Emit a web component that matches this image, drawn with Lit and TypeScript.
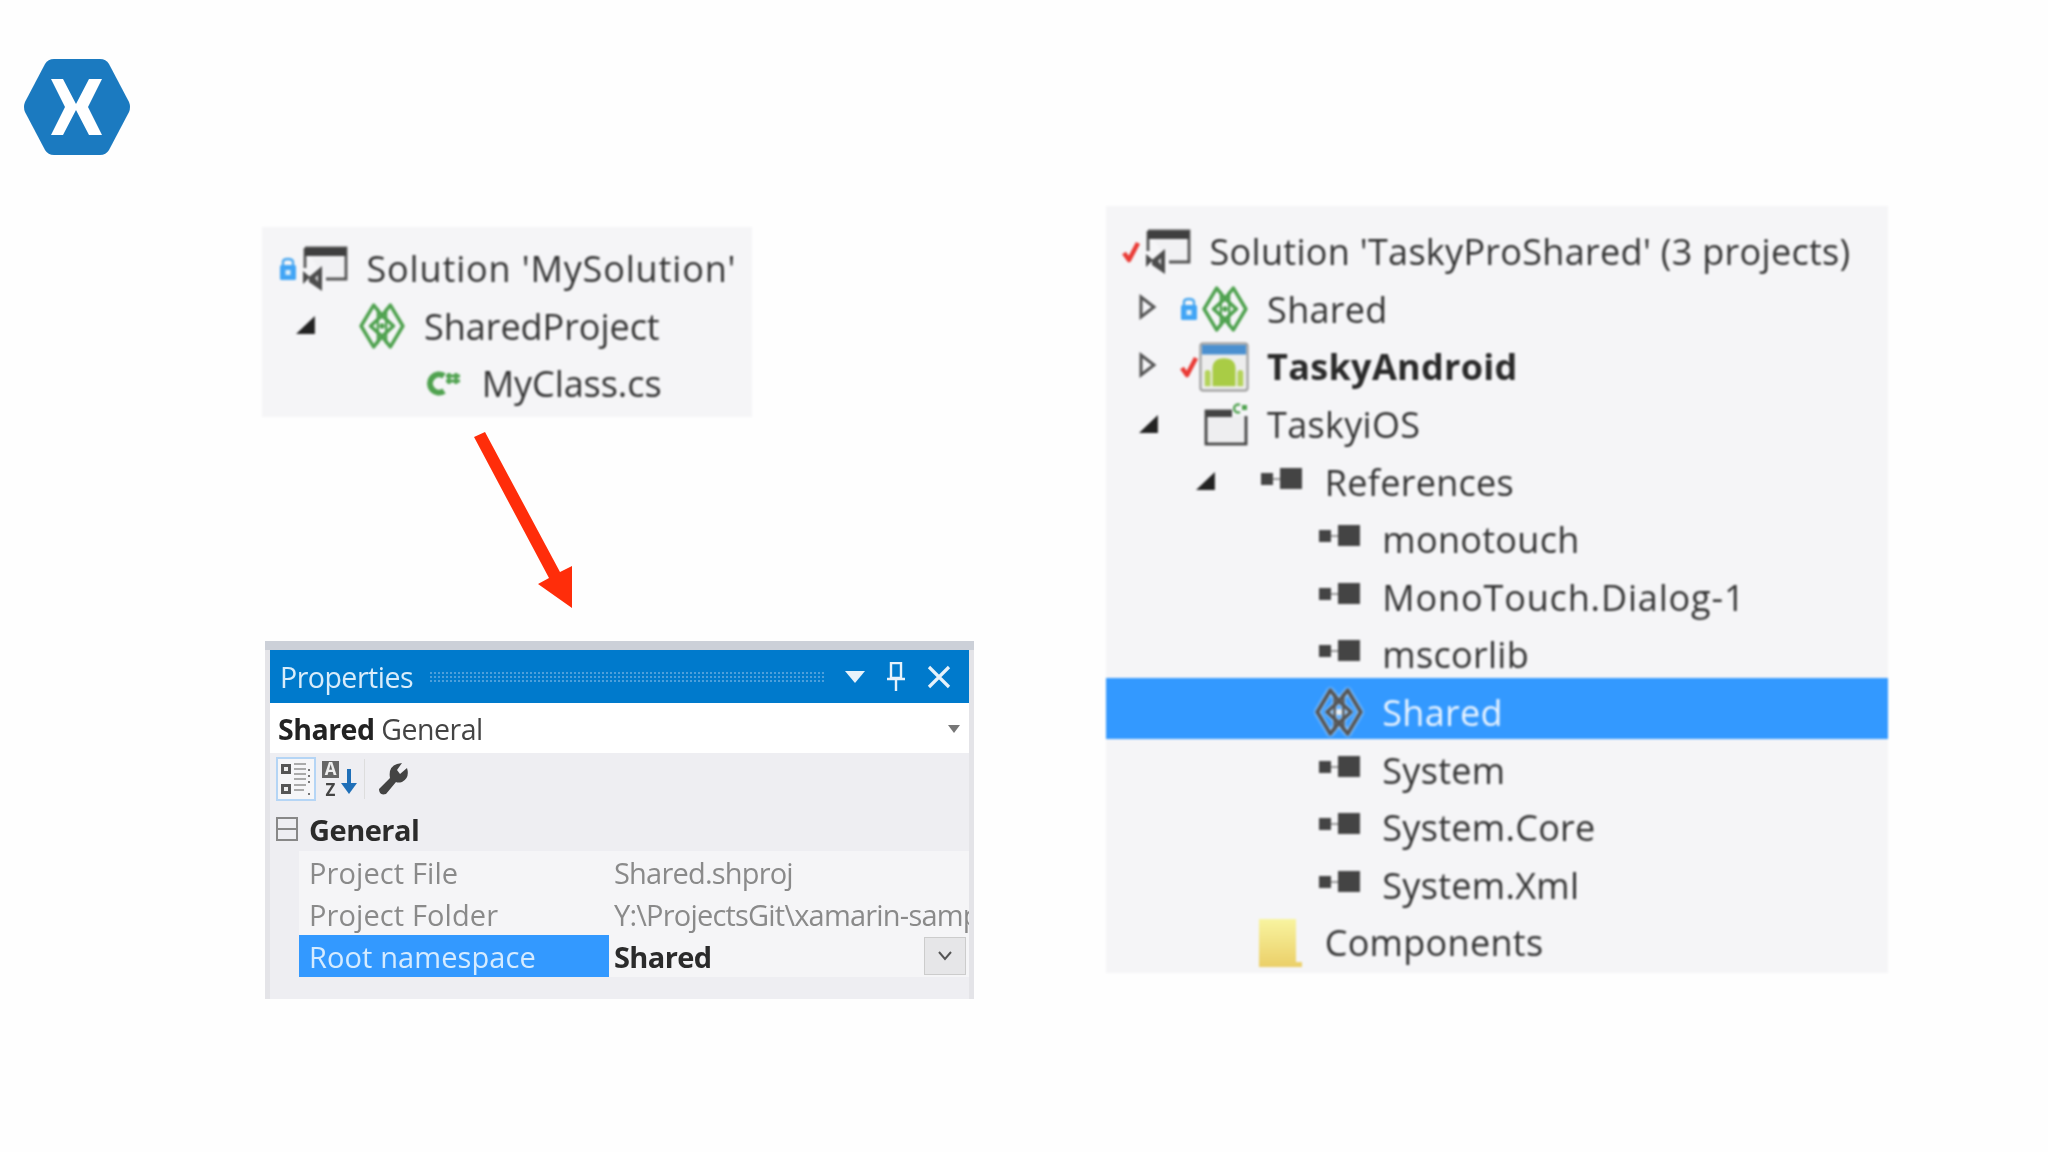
import { LitElement, html, css } from "lit";
import { customElement } from "lit/decorators.js";

const diamond = (c: string, dot: string) => html`<svg width="48" height="48" viewBox="0 0 46 46" fill="none" stroke=${c} stroke-width="3.4" stroke-linejoin="round">
  <path d="M15 3 L3 23 L15 43 L23 33 L31 43 L43 23 L31 3 L23 13 Z"/>
  <path d="M23 13 L12 23 L23 33 L34 23 Z"/>
  <path d="M19 6 V40 M27 6 V40" stroke-width="2.2"/>
  <circle cx="23" cy="23" r="2.6" fill=${dot} stroke="none"/>
</svg>`;

const solution = html`<svg width="46" height="46" viewBox="0 0 46 46">
  <path d="M3 2 H44 V33 H24 M3 2 V22" fill="#f1f1f3" stroke="#555" stroke-width="2.8"/>
  <rect x="3" y="2" width="41" height="8" fill="#3f3f3f"/>
  <path d="M1 25 L8 31 L1 38 Z M7 31 L20 20 V45 L7 36 Z" fill="#4d4d4d"/>
  <path d="M13 32 L16 29 V36 Z" fill="#d8d8da"/>
</svg>`;

const lock = html`<svg width="18" height="24" viewBox="0 0 18 24">
  <path d="M4 9 V5 Q4 2 9 2 Q14 2 14 5 V9" fill="none" stroke="#4aa8f0" stroke-width="2.4"/>
  <rect x="1" y="8" width="16" height="15" rx="1.5" fill="#42a5f5"/>
  <rect x="6.5" y="13" width="5" height="5" fill="#d9eefc"/>
</svg>`;

const check = html`<svg width="20" height="24" viewBox="0 0 20 24">
  <path d="M3 13 L8 20 L17 3" fill="none" stroke="#ea3a35" stroke-width="4.6" stroke-linejoin="round"/>
</svg>`;

const android = html`<svg width="54" height="54" viewBox="0 0 52 52">
  <rect x="1.5" y="1.5" width="49" height="49" rx="3" fill="#ededed" stroke="#a5a5a5" stroke-width="2.5"/>
  <rect x="3" y="3" width="46" height="10" fill="#4b90d0"/>
  <path d="M14 46 V28 Q14 17 26 17 Q38 17 38 28 V46 Z" fill="#a9cc45"/>
  <path d="M6 46 V32 Q6 29 9 29 Q12 29 12 32 V46 Z M40 46 V32 Q40 29 43 29 Q46 29 46 32 V46 Z" fill="#b4d35a"/>
</svg>`;

const ios = html`<svg width="46" height="46" viewBox="0 0 46 46">
  <rect x="3" y="9" width="40" height="33" fill="#eeeef0" stroke="#444" stroke-width="2.8"/>
  <rect x="3" y="8" width="26" height="7" fill="#444"/>
  <rect x="29" y="0" width="17" height="14" fill="#f5f5f7"/>
  <path d="M37 3 A4 4 0 1 0 37 10" fill="none" stroke="#4fa24f" stroke-width="2.4"/>
  <rect x="39" y="3" width="5" height="5" fill="#4fa24f"/>
</svg>`;

const reference = html`<svg class="up" width="46" height="24" viewBox="0 0 46 24">
  <rect x="1" y="6" width="12" height="12" fill="#444"/>
  <rect x="13" y="11" width="7" height="2" fill="#999"/>
  <rect x="20" y="1" width="22" height="21" fill="#444"/>
</svg>`;

const folder = html`<svg width="48" height="50" viewBox="0 0 48 50">
  <defs><linearGradient id="fg" x1="0" y1="0" x2="0" y2="1"><stop offset="0" stop-color="#f8f4a0"/><stop offset="1" stop-color="#ebcf68"/></linearGradient></defs>
  <path d="M1 1 H38 V44 H44 V49 H1 Z" fill="url(#fg)"/>
</svg>`;

const csharp = html`<svg width="38" height="30" viewBox="0 0 38 30">
  <path d="M19 7 A9 9 0 1 0 19 22" fill="none" stroke="#4fa24f" stroke-width="6"/>
  <path d="M24 4 V15 M31 4 V15 M21 7 H35 M21 12 H35" stroke="#4fa24f" stroke-width="3"/>
</svg>`;

const expOpen = html`<svg class="exp" width="20" height="20" viewBox="0 0 18 18"><path d="M17 1 V17 H0 Z" fill="#222"/></svg>`;
const expClosed = html`<svg class="exp exp-c" width="18" height="26" viewBox="0 0 18 24"><path d="M2 2 L15 12 L2 22 Z" fill="#f5f5f7" stroke="#555" stroke-width="3"/></svg>`;

type Row = { d: number; exp?: "o" | "c"; badge?: any; icon?: any; text: string; bold?: boolean; sel?: boolean; wide?: boolean };

const leftRows: Row[] = [
  { d: 0, badge: lock, icon: solution, text: "Solution 'MySolution'", wide: true },
  { d: 1, exp: "o", icon: diamond("#4fa24f", "#4fa24f"), text: "SharedProject" },
  { d: 2, icon: csharp, text: "MyClass.cs" },
];

const rightRows: Row[] = [
  { d: 0, badge: check, icon: solution, text: "Solution 'TaskyProShared' (3 projects)" },
  { d: 1, exp: "c", badge: lock, icon: diamond("#4fa24f", "#4fa24f"), text: "Shared" },
  { d: 1, exp: "c", badge: check, icon: android, text: "TaskyAndroid", bold: true },
  { d: 1, exp: "o", icon: ios, text: "TaskyiOS" },
  { d: 2, exp: "o", icon: reference, text: "References" },
  { d: 3, icon: reference, text: "monotouch" },
  { d: 3, icon: reference, text: "MonoTouch.Dialog-1", wide: true },
  { d: 3, icon: reference, text: "mscorlib" },
  { d: 3, icon: diamond("#555", "#eee"), text: "Shared", sel: true },
  { d: 3, icon: reference, text: "System" },
  { d: 3, icon: reference, text: "System.Core" },
  { d: 3, icon: reference, text: "System.Xml" },
  { d: 2, icon: folder, text: "Components" },
];

@customElement("app-root")
export class AppRoot extends LitElement {
  static styles = css`
    :host { display: block; width: 2048px; height: 1152px; background: #fefefe; overflow: hidden;
      font-family: "Open Sans", "Noto Sans", sans-serif; color: #333; }
    .page { display: flex; width: 2048px; height: 1152px; }
    .left { width: 1106px; flex: none; display: flex; flex-direction: column; }
    .right { flex: 1; padding-top: 206px; }
    .logo { display: block; margin: 59px 0 0 23px; filter: blur(0.5px); }
    .tree { background: #f5f5f7; filter: blur(0.8px); font-size: 36px; letter-spacing: 0.3px; }
    .tree-a { width: 490px; height: 190px; margin: 72px 0 0 262px; padding: 13px 0 0 1px; box-sizing: border-box; letter-spacing: -0.05px; }
    .tree-b { width: 782px; height: 767px; padding-top: 17px; box-sizing: border-box; }
    .row { height: 57.6px; display: flex; align-items: center; padding-left: 15px; white-space: nowrap; position: relative; }
    .spacer { flex: none; display: flex; justify-content: flex-end; align-items: center; }
    .exp { margin-right: 20px; margin-bottom: 2px; }
    .exp-c { margin-right: 22px; margin-bottom: 4px; }
    .up { margin-bottom: 7px; }
    .badge { flex: none; width: 20px; display: flex; justify-content: center; align-items: center; }
    .icon { flex: none; width: 50px; display: flex; justify-content: flex-end; align-items: center; }
    .row-text { margin-left: 18.5px; }
    .bold { font-weight: 700; color: #2a2a2a; }
    .wide { letter-spacing: 0.85px; }
    .sel { color: #eaf4ff; }
    .sel::before { content: ""; position: absolute; left: 0; right: 0; top: -6px; height: 61px; background: #3399ff; }
    .sel > * { position: relative; }
    .sel svg { width: 50px; height: 50px; margin-bottom: 2px; filter: drop-shadow(0 0 1.5px #fff); }
    .arrow { display: block; margin: 13px 0 0 470px; }
    .props { width: 709px; height: 358px; margin: 31px 0 0 265px; box-sizing: border-box; padding: 9px 5px 0 5px;
      background: #fff; filter: blur(0.7px); box-shadow: inset 0 9px 0 #ccd0d8, inset 5px 0 0 #e4e4e8, inset -5px 0 0 #e4e4e8;
      font-size: 29px; letter-spacing: -0.5px; }
    .p-title { height: 53px; background: #007acc; color: #d8ecfa; display: flex; align-items: center; padding: 0 18px 0 10px; gap: 16px; font-size: 28.5px; }
    .grip { flex: 1; height: 12px; background-image: radial-gradient(circle, #4d9fdb 1px, transparent 1.3px); background-size: 4px 4px; }
    .p-btns { display: flex; align-items: center; gap: 21px; margin-left: 4px; }
    .p-combo { height: 50px; background: #fff; display: flex; align-items: center; justify-content: space-between; padding: 1px 9px 0 8px; box-sizing: border-box; color: #444; font-size: 28.5px; }
    .p-combo b { color: #222; }
    .p-tool { height: 52px; background: #eeeef2; display: flex; align-items: center; padding-left: 6px; gap: 5px; }
    .tool-on { width: 40px; height: 44px; border: 2px solid #b5d5f5; box-sizing: border-box; display: flex; align-items: center; justify-content: center; background: #f6f6f8; }
    .tool-sep { width: 1px; height: 40px; background: #ddd; margin: 0 7px 0 0; }
    .az { font: 700 17px/17px "Open Sans", sans-serif; letter-spacing: 0; fill: #444; }
    .az-on { fill: #eee; }
    .p-grid { background: #eeeef2; height: 194px; }
    .p-cat { height: 46px; display: flex; align-items: center; padding: 2px 0 0 6px; box-sizing: border-box; gap: 11px; font-weight: 700; color: #2b2b2b; }
    .p-row { height: 42px; display: grid; grid-template-columns: 29px 310px 1fr; align-items: center; }
    .p-name { color: #8a8a8a; padding-left: 10px; background: #f5f5f7; height: 100%; display: flex; align-items: center; letter-spacing: 0.1px; }
    .p-val { color: #8a8a8a; padding: 0 4px 0 5px; background: #f5f5f7; height: 100%; display: flex; align-items: center; overflow: hidden; white-space: nowrap; letter-spacing: -0.8px; }
    .p-row.active .p-name { background: #3399ff; color: #d5ebff; }
    .p-row.active .p-val { color: #2b2b2b; font-weight: 700; justify-content: space-between; padding-right: 3px; letter-spacing: -0.6px; }
    .dd { flex: none; width: 42px; height: 38px; background: #e6e6e8; border: 1px solid #ccc; box-sizing: border-box; display: flex; align-items: center; justify-content: center; }
  `;

  private renderRow(r: Row) {
    return html`<div class="row ${r.sel ? "sel" : ""}">
      <div class="spacer" style="width:${r.d * 57.6}px">${r.exp === "o" ? expOpen : r.exp === "c" ? expClosed : ""}</div>
      <div class="badge">${r.badge ?? ""}</div>
      <div class="icon">${r.icon ?? ""}</div>
      <div class="row-text ${r.bold ? "bold" : ""} ${r.wide ? "wide" : ""}">${r.text}</div>
    </div>`;
  }

  render() {
    return html`<div class="page">
      <div class="left">
        <svg class="logo" width="108" height="96" viewBox="0 0 108 96">
          <path d="M31 0 H77 Q83 0 86 5 L106 43 Q108 48 106 53 L86 91 Q83 96 77 96 H31 Q25 96 22 91 L2 53 Q0 48 2 43 L22 5 Q25 0 31 0 Z" fill="#1b7ac0"/>
          <path d="M28 20 H40 L53 45 L66 20 H79 L65 48 L79 76 H66 L53 51 L40 76 H28 L42 48 Z" fill="#fff"/>
        </svg>
        <div class="tree tree-a">${leftRows.map((r) => this.renderRow(r))}</div>
        <svg class="arrow" width="106" height="180" viewBox="0 0 106 180">
          <path d="M4 7 L15 2 L90 142 L102 136 L102 178 L68 154 L79 148 Z" fill="#ff2d0a"/>
        </svg>
        <div class="props">
          <div class="p-title">
            <span>Properties</span><div class="grip"></div>
            <div class="p-btns">
              <svg width="20" height="12" viewBox="0 0 20 12"><path d="M0 0 H20 L10 12 Z" fill="#e6f2fb"/></svg>
              <svg width="20" height="30" viewBox="0 0 20 30" fill="none" stroke="#e6f2fb" stroke-width="2.4"><path d="M5 1 H15 V16 H5 Z M1 17 H19 M10 17 V29"/></svg>
              <svg width="24" height="24" viewBox="0 0 24 24" stroke="#e6f2fb" stroke-width="3.2"><path d="M2 2 L22 22 M22 2 L2 22"/></svg>
            </div>
          </div>
          <div class="p-combo">
            <span><b>Shared</b> General</span>
            <svg width="12" height="8" viewBox="0 0 12 8"><path d="M0 0 H12 L6 8 Z" fill="#777"/></svg>
          </div>
          <div class="p-tool">
            <div class="tool-on">
              <svg width="32" height="36" viewBox="0 0 32 36">
                <rect x="1" y="3" width="10" height="10" fill="#555"/><rect x="4" y="6" width="4" height="4" fill="#eee"/>
                <rect x="1" y="23" width="10" height="10" fill="#555"/><rect x="4" y="26" width="4" height="4" fill="#eee"/>
                <path d="M14 3 H26 M14 8 H26 M14 13 H26 M14 18 H26 M14 24 H26 M14 29 H24" stroke="#aaa" stroke-width="2"/>
                <path d="M29 8 V10 M29 14 V16 M29 20 V22 M29 32 V34" stroke="#777" stroke-width="2"/>
              </svg>
            </div>
            <svg width="38" height="40" viewBox="0 0 38 40">
              <rect x="1" y="2" width="17" height="17" fill="#666"/>
              <text class="az az-on" x="9.5" y="16" text-anchor="middle">A</text>
              <text class="az" x="9.5" y="37" text-anchor="middle">Z</text>
              <path d="M28 10 V32" stroke="#1f6fb8" stroke-width="4"/><path d="M20 24 L28 35 L36 24 Z" fill="#1f6fb8"/>
            </svg>
            <div class="tool-sep"></div>
            <svg width="32" height="34" viewBox="0 0 32 34">
              <path d="M2 27 L13 16 Q11 5 20 2 L25 1 L20 8 L23 12 L30 6 Q33 16 25 20 Q21 21 19 20 L9 32 Q2 34 2 27 Z" fill="#444"/>
            </svg>
          </div>
          <div class="p-grid">
            <div class="p-cat">
              <svg width="22" height="24" viewBox="0 0 22 24" fill="none" stroke="#888" stroke-width="2"><rect x="1" y="1" width="20" height="22"/><path d="M1 12 H21"/></svg>
              <span>General</span>
            </div>
            <div class="p-row"><div></div><div class="p-name">Project File</div><div class="p-val">Shared.shproj</div></div>
            <div class="p-row"><div></div><div class="p-name">Project Folder</div><div class="p-val">Y:\\ProjectsGit\\xamarin-samples</div></div>
            <div class="p-row active"><div></div><div class="p-name">Root namespace</div><div class="p-val"><span>Shared</span>
              <div class="dd"><svg width="14" height="10" viewBox="0 0 14 10" fill="none" stroke="#555" stroke-width="2"><path d="M1 1 L7 8 L13 1"/></svg></div></div></div>
          </div>
        </div>
      </div>
      <div class="right">
        <div class="tree tree-b">${rightRows.map((r) => this.renderRow(r))}</div>
      </div>
    </div>`;
  }
}
